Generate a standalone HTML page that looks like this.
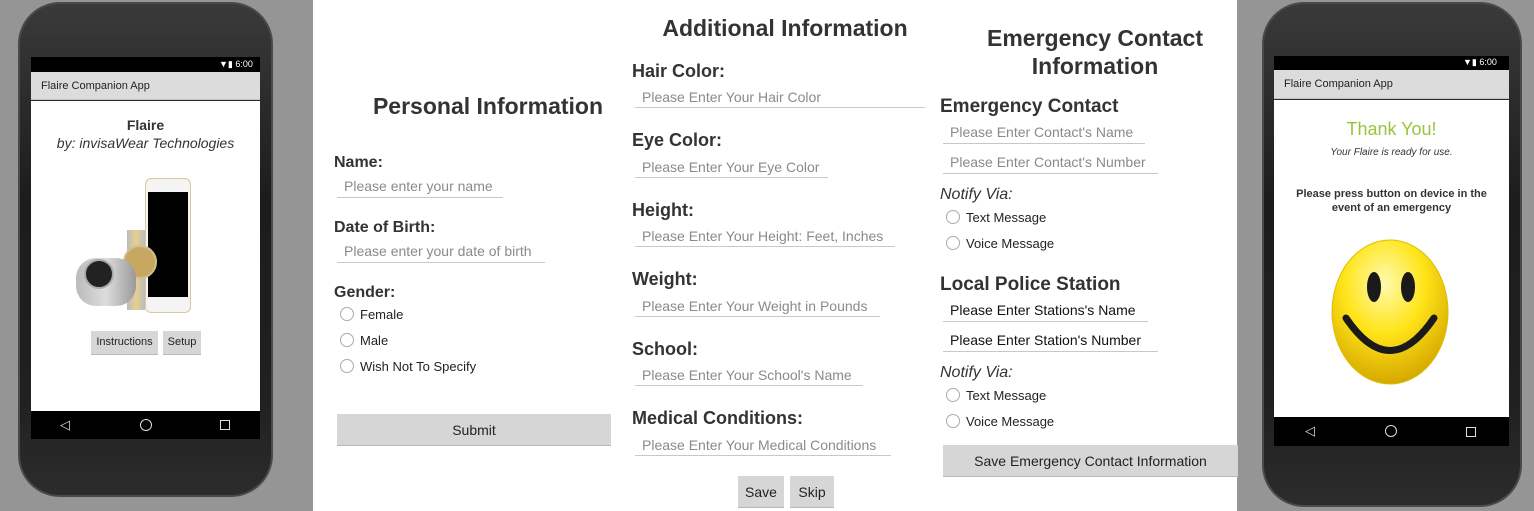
<!DOCTYPE html>
<html><head><meta charset="utf-8"><style>
*{margin:0;padding:0;box-sizing:border-box}
body{width:1534px;height:511px;background:#959595;position:relative;overflow:hidden;font-family:"Liberation Sans",sans-serif;color:#333}
.a{position:absolute;white-space:nowrap;line-height:1}
.h{font-weight:bold;color:#333}
.ph{color:#8a8a8a;font-size:14px}
.ln{position:absolute;height:1px;background:#c8c8c8}
.r{position:absolute;width:14px;height:14px;border:1px solid #aaa;border-radius:50%}
.rt{font-size:13px;color:#222}
.btn{position:absolute;background:#d6d6d6;border-bottom:1px solid #b8b8b8;color:#222;text-align:center}
.phone{position:absolute;border-radius:42px;background:linear-gradient(#3a3a3a,#1c1c1c 40%,#202020 80%,#2c2c2c);border:2px solid #4a4a4a}
.scr{position:absolute;background:#fff}
</style></head><body>
<!-- left phone -->
<div class="phone" style="left:18px;top:2px;width:255px;height:495px"></div>
<div class="a" style="left:31px;top:57px;width:229px;height:15px;background:#000"></div>
<div class="a" style="left:219px;top:60px;font-size:9px;color:#fff">▼▮ 6:00</div>
<div class="a" style="left:31px;top:72px;width:229px;height:28px;background:#dcdcdc;border-bottom:1px solid #c4c4c4"></div>
<div class="a" style="left:41px;top:81px;font-size:11px;color:#222">Flaire Companion App</div>
<div class="scr" style="left:31px;top:101px;width:229px;height:310px"></div>
<div class="a h" style="left:31px;top:118px;width:229px;text-align:center;font-size:14px">Flaire</div>
<div class="a" style="left:31px;top:136px;width:229px;text-align:center;font-size:14px;font-style:italic;color:#333">by: invisaWear Technologies</div>
<div class="a" style="left:145px;top:178px;width:46px;height:135px;border:1px solid #d8c8a0;border-radius:6px;background:#f4f4f4"></div>
<div class="a" style="left:148px;top:192px;width:40px;height:105px;background:#000"></div>
<div class="a" style="left:127px;top:230px;width:18px;height:80px;background:linear-gradient(90deg,#bbb,#e6d090,#bbb)"></div>
<div class="a" style="left:123px;top:245px;width:34px;height:34px;border-radius:50%;background:#c8a860;border:2px solid #d0c090"></div>
<div class="a" style="left:76px;top:258px;width:60px;height:48px;border-radius:20px;background:linear-gradient(90deg,#bbb,#ddd,#999)"></div>
<div class="a" style="left:84px;top:259px;width:30px;height:30px;border-radius:50%;background:#222;border:2px solid #aaa"></div>
<div class="btn" style="left:91px;top:331px;width:67px;height:24px;font-size:11px;line-height:23px">Instructions</div>
<div class="btn" style="left:163px;top:331px;width:38px;height:24px;font-size:11px;line-height:23px">Setup</div>
<div class="a" style="left:31px;top:411px;width:229px;height:28px;background:#000"></div>
<div class="a" style="left:60px;top:418px;font-size:13px;color:#ddd">◁</div>
<div class="a" style="left:140px;top:419px;width:12px;height:12px;border:1.5px solid #ddd;border-radius:50%"></div>
<div class="a" style="left:220px;top:420px;width:10px;height:10px;border:1.5px solid #ddd"></div>

<!-- white middle -->
<div class="scr" style="left:313px;top:0;width:924px;height:511px"></div>

<!-- Personal -->
<div class="a h" style="left:313px;top:95px;text-align:center;font-size:23px;width:350px">Personal Information</div>
<div class="a h" style="left:334px;top:155px;font-size:16px">Name:</div>
<div class="a ph" style="left:344px;top:179px">Please enter your name</div>
<div class="ln" style="left:337px;top:197px;width:166px"></div>
<div class="a h" style="left:334px;top:220px;font-size:16px">Date of Birth:</div>
<div class="a ph" style="left:344px;top:244px">Please enter your date of birth</div>
<div class="ln" style="left:337px;top:262px;width:208px"></div>
<div class="a h" style="left:334px;top:285px;font-size:16px">Gender:</div>
<div class="r" style="left:340px;top:307px"></div><div class="a rt" style="left:360px;top:308px">Female</div>
<div class="r" style="left:340px;top:333px"></div><div class="a rt" style="left:360px;top:334px">Male</div>
<div class="r" style="left:340px;top:359px"></div><div class="a rt" style="left:360px;top:360px">Wish Not To Specify</div>
<div class="btn" style="left:337px;top:414px;width:274px;height:32px;font-size:14px;line-height:32px">Submit</div>

<!-- Additional -->
<div class="a h" style="left:625px;top:17px;width:320px;text-align:center;font-size:23px">Additional Information</div>
<div class="a h" style="left:632px;top:62px;font-size:18px">Hair Color:</div>
<div class="a ph" style="left:642px;top:90px">Please Enter Your Hair Color</div>
<div class="ln" style="left:635px;top:107px;width:290px"></div>
<div class="a h" style="left:632px;top:131px;font-size:18px">Eye Color:</div>
<div class="a ph" style="left:642px;top:160px">Please Enter Your Eye Color</div>
<div class="ln" style="left:635px;top:177px;width:193px"></div>
<div class="a h" style="left:632px;top:201px;font-size:18px">Height:</div>
<div class="a ph" style="left:642px;top:229px">Please Enter Your Height: Feet, Inches</div>
<div class="ln" style="left:635px;top:246px;width:260px"></div>
<div class="a h" style="left:632px;top:270px;font-size:18px">Weight:</div>
<div class="a ph" style="left:642px;top:299px">Please Enter Your Weight in Pounds</div>
<div class="ln" style="left:635px;top:316px;width:245px"></div>
<div class="a h" style="left:632px;top:340px;font-size:18px">School:</div>
<div class="a ph" style="left:642px;top:368px">Please Enter Your School's Name</div>
<div class="ln" style="left:635px;top:385px;width:228px"></div>
<div class="a h" style="left:632px;top:409px;font-size:18px">Medical Conditions:</div>
<div class="a ph" style="left:642px;top:438px">Please Enter Your Medical Conditions</div>
<div class="ln" style="left:635px;top:455px;width:256px"></div>
<div class="btn" style="left:738px;top:476px;width:46px;height:32px;font-size:14px;line-height:32px">Save</div>
<div class="btn" style="left:790px;top:476px;width:44px;height:32px;font-size:14px;line-height:32px">Skip</div>

<!-- Emergency -->
<div class="a h" style="left:950px;top:24px;width:290px;text-align:center;font-size:23px;line-height:28px;white-space:normal">Emergency Contact Information</div>
<div class="a h" style="left:940px;top:97px;font-size:19px">Emergency Contact</div>
<div class="a ph" style="left:950px;top:125px">Please Enter Contact's Name</div>
<div class="ln" style="left:943px;top:143px;width:202px"></div>
<div class="a ph" style="left:950px;top:155px">Please Enter Contact's Number</div>
<div class="ln" style="left:943px;top:173px;width:215px"></div>
<div class="a" style="left:940px;top:187px;font-size:16px;font-style:italic;color:#333">Notify Via:</div>
<div class="r" style="left:946px;top:210px"></div><div class="a rt" style="left:966px;top:211px">Text Message</div>
<div class="r" style="left:946px;top:236px"></div><div class="a rt" style="left:966px;top:237px">Voice Message</div>
<div class="a h" style="left:940px;top:275px;font-size:19px">Local Police Station</div>
<div class="a" style="left:950px;top:303px;font-size:14px;color:#111">Please Enter Stations's Name</div>
<div class="ln" style="left:943px;top:321px;width:205px"></div>
<div class="a" style="left:950px;top:333px;font-size:14px;color:#111">Please Enter Station's Number</div>
<div class="ln" style="left:943px;top:351px;width:215px"></div>
<div class="a" style="left:940px;top:365px;font-size:16px;font-style:italic;color:#333">Notify Via:</div>
<div class="r" style="left:946px;top:388px"></div><div class="a rt" style="left:966px;top:389px">Text Message</div>
<div class="r" style="left:946px;top:414px"></div><div class="a rt" style="left:966px;top:415px">Voice Message</div>
<div class="btn" style="left:943px;top:445px;width:295px;height:32px;font-size:14px;line-height:32px">Save Emergency Contact Information</div>

<!-- right phone -->
<div class="phone" style="left:1262px;top:2px;width:260px;height:505px"></div>
<div class="a" style="left:1274px;top:56px;width:235px;height:14px;background:#000"></div>
<div class="a" style="left:1463px;top:58px;font-size:9px;color:#fff">▼▮ 6:00</div>
<div class="a" style="left:1274px;top:70px;width:235px;height:29px;background:#dcdcdc;border-bottom:1px solid #c4c4c4"></div>
<div class="a" style="left:1284px;top:79px;font-size:11px;color:#222">Flaire Companion App</div>
<div class="scr" style="left:1274px;top:100px;width:235px;height:317px"></div>
<div class="a" style="left:1274px;top:120px;width:235px;text-align:center;font-size:18px;color:#9ac43c">Thank You!</div>
<div class="a" style="left:1274px;top:148px;width:235px;text-align:center;font-size:10px;font-style:italic;color:#333">Your Flaire is ready for use.</div>
<div class="a h" style="left:1286px;top:187px;width:211px;text-align:center;font-size:11px;line-height:14px;white-space:normal">Please press button on device in the event of an emergency</div>
<svg class="a" style="left:1330px;top:238px" width="122" height="148" viewBox="0 0 122 148">
<defs><radialGradient id="g" cx="45%" cy="30%" r="70%"><stop offset="0" stop-color="#fffbb0"/><stop offset=".5" stop-color="#ffe419"/><stop offset="1" stop-color="#d6a800"/></radialGradient></defs>
<ellipse cx="60" cy="74" rx="58" ry="72" fill="url(#g)" stroke="#d8c000"/>
<ellipse cx="44" cy="49" rx="7" ry="15" fill="#1a1a1a"/>
<ellipse cx="78" cy="49" rx="7" ry="15" fill="#1a1a1a"/>
<path d="M16 80 Q60 145 104 80" fill="none" stroke="#1a1a1a" stroke-width="7" stroke-linecap="round"/>
</svg>
<div class="a" style="left:1274px;top:417px;width:235px;height:29px;background:#000"></div>
<div class="a" style="left:1305px;top:424px;font-size:13px;color:#ddd">◁</div>
<div class="a" style="left:1385px;top:425px;width:12px;height:12px;border:1.5px solid #ddd;border-radius:50%"></div>
<div class="a" style="left:1466px;top:427px;width:10px;height:10px;border:1.5px solid #ddd"></div>
</body></html>
